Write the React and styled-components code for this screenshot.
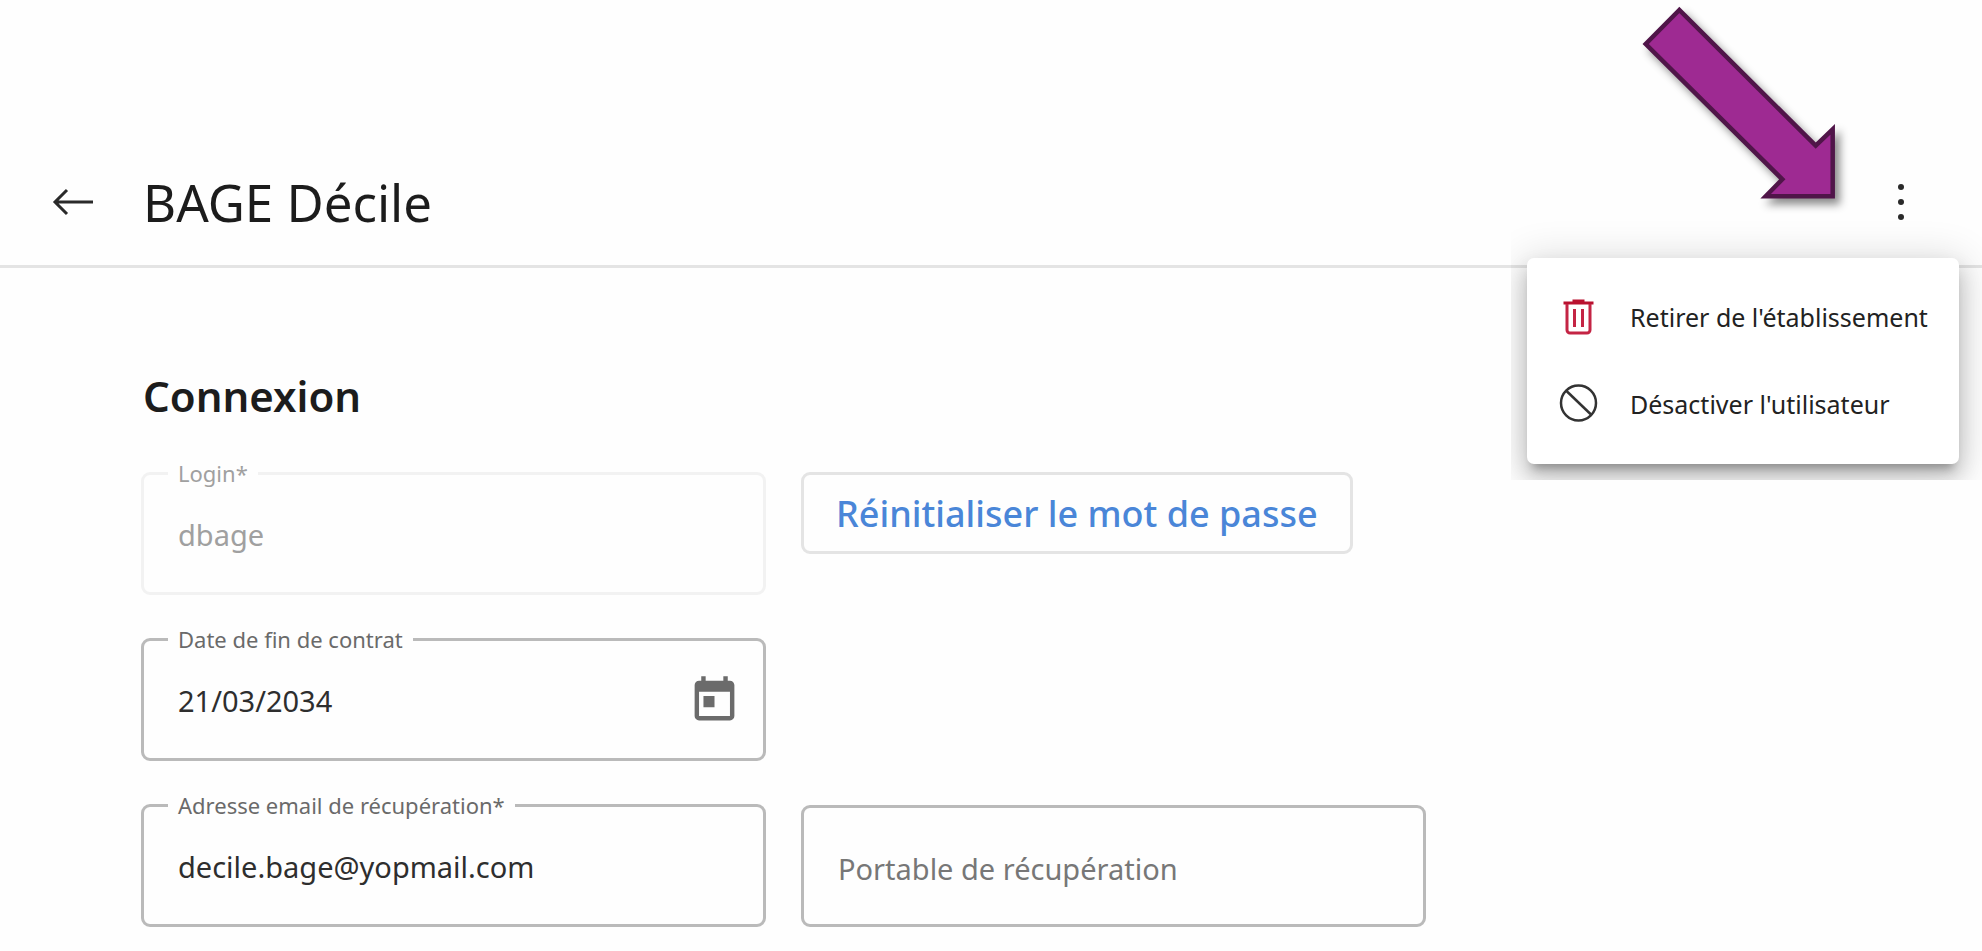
import React, { useState } from "react";
import styled, { createGlobalStyle } from "styled-components";
import { MdToday } from "react-icons/md";

const GlobalStyle = createGlobalStyle`
    * {
        box-sizing: border-box;
    }

    body {
        margin: 0;
        background-color: #fefefe;
        color: #1c1c1c;
        font-family: "Noto Sans", "Open Sans", sans-serif;
    }

    button, input {
        font-family: inherit;
    }
`;

const Page = styled.div`
    position: relative;
    padding-top: 139px;
`;

const Header = styled.header`
    display: flex;
    align-items: center;
    height: 129px;
    padding: 0 60px 0 52px;
    border-bottom: 3px solid #e4e4e4;
`;

const IconButton = styled.button`
    display: flex;
    align-items: center;
    justify-content: center;
    padding: 0;
    border: none;
    background: none;
    color: ${(props) => props.$color || "#2a2a2a"};
    cursor: pointer;
`;

const Title = styled.h1`
    flex: 1;
    margin: 0 0 0 49px;
    font-size: 51px;
    font-weight: 400;
    line-height: 60px;
`;

const Menu = styled.ul`
    position: absolute;
    top: 258px;
    right: 23px;
    width: 432px;
    margin: 0;
    padding: 15px 0 17px;
    list-style: none;
    border-radius: 7px;
    background-color: #fff;
    box-shadow: 0 10px 10px -6px rgba(0, 0, 0, 0.28), 0 12px 20px 2px rgba(0, 0, 0, 0.16), 0 6px 40px 6px rgba(0, 0, 0, 0.14);
    clip-path: inset(-50px -23px -16px -16px);
`;

const MenuItem = styled.button`
    display: flex;
    align-items: center;
    gap: 31px;
    width: 100%;
    height: 87px;
    padding: 0 0 0 32px;
    border: none;
    background: none;
    color: #222;
    font-size: 25px;
    white-space: nowrap;
    cursor: pointer;
`;

const Pointer = styled.svg`
    position: absolute;
    top: 0;
    right: 132px;
    filter: drop-shadow(5px 6px 4px rgba(0, 0, 0, 0.45));
`;

const Section = styled.form`
    padding: 98px 141px 22px;
`;

const SectionTitle = styled.h2`
    margin: 0 0 35px;
    padding-left: 2px;
    font-size: 42px;
    font-weight: 600;
    line-height: 60px;
`;

const Grid = styled.div`
    display: grid;
    grid-template-columns: repeat(2, minmax(0, 625px));
    gap: 32px 35px;
`;

const Field = styled.fieldset`
    grid-column-start: 1;
    display: flex;
    align-items: center;
    min-width: 0;
    height: 134px;
    margin: 0;
    padding: 0 22px 9px 24px;
    border: 3px solid ${(props) => (props.$disabled ? "#f2f2f2" : "#bababa")};
    border-radius: 9px;
    color: ${(props) => (props.$disabled ? "#a0a0a0" : "#2e2e2e")};
`;

const PlainField = styled(Field)`
    grid-column-start: 2;
    align-self: end;
    height: 122px;
    padding-top: 4px;
    padding-bottom: 0;
`;

const Legend = styled.legend`
    padding: 0 10px;
    color: ${(props) => (props.$disabled ? "#a0a0a0" : "#6a6a6a")};
    font-size: 22px;
    line-height: 24px;
`;

const Input = styled.input`
    flex: 1;
    min-width: 0;
    height: 94px;
    padding: 0 10px;
    border: none;
    outline: none;
    background: none;
    color: inherit;
    font-size: 29px;

    &::placeholder {
        color: #777;
        opacity: 1;
    }
`;

const OutlineButton = styled.button`
    justify-self: start;
    height: 82px;
    margin-top: 11px;
    padding: 0 32px;
    border: 3px solid #e4e4e4;
    border-radius: 9px;
    background: none;
    color: #4a86d8;
    font-size: 36px;
    font-weight: 500;
    white-space: nowrap;
    cursor: pointer;
`;

const ArrowIcon = () => (
    <svg width="42" height="30" viewBox="0 0 42 30" fill="none" stroke="currentColor" strokeWidth="3">
        <path d="M41 15H3M15 3L3 15l12 12" />
    </svg>
);

const DotsIcon = () => (
    <svg width="42" height="42" viewBox="0 0 42 42" fill="currentColor">
        <circle cx="21" cy="6" r="3" />
        <circle cx="21" cy="21" r="3" />
        <circle cx="21" cy="36" r="3" />
    </svg>
);

const TrashIcon = () => (
    <svg width="40" height="40" viewBox="0 0 40 40" fill="none" stroke="#c42444" strokeWidth="3">
        <path d="M4.500 6h30M13.500 4h12" stroke="#b9112f" />
        <path d="M8 7v26a3 3 0 0 0 3 3h17a3 3 0 0 0 3-3V7" />
        <path d="M15.500 12v18M23.500 12v18" />
    </svg>
);

const BanIcon = () => (
    <svg width="40" height="40" viewBox="0 0 40 40" fill="none" stroke="#333" strokeWidth="2.5">
        <circle cx="19.500" cy="19" r="17.500" />
        <path d="M7.500 7l24.500 23.500" />
    </svg>
);

const TextField = ({ id, label, value, onChange, disabled, children }) => (
    <Field $disabled={disabled}>
        <Legend $disabled={disabled}>
            <label htmlFor={id}>{label}</label>
        </Legend>
        <Input id={id} name={id} value={value} onChange={onChange} disabled={disabled} />
        {children}
    </Field>
);

const App = () => {
    const [form, setForm] = useState({
        login: "dbage",
        finContrat: "21/03/2034",
        email: "decile.bage@yopmail.com",
        portable: "",
    });
    const [menuOpen, setMenuOpen] = useState(true);

    const handleChange = (e) => {
        setForm({ ...form, [e.target.name]: e.target.value });
    };

    return (
        <Page>
            <GlobalStyle />
            <Header>
                <IconButton type="button" aria-label="Retour">
                    <ArrowIcon />
                </IconButton>
                <Title>BAGE Décile</Title>
                <IconButton type="button" aria-label="Actions" onClick={() => setMenuOpen(!menuOpen)}>
                    <DotsIcon />
                </IconButton>
            </Header>

            {menuOpen && (
                <Menu>
                    <li>
                        <MenuItem type="button">
                            <TrashIcon />
                            Retirer de l'établissement
                        </MenuItem>
                    </li>
                    <li>
                        <MenuItem type="button">
                            <BanIcon />
                            Désactiver l'utilisateur
                        </MenuItem>
                    </li>
                </Menu>
            )}

            <Pointer width="210" height="215" viewBox="0 0 210 215" aria-hidden="true">
                <path
                    d="M39.300 10L5.700 44l136.600 135.300-16.600 17h67v-67l-17 16.400z"
                    fill="#9e2a92"
                    stroke="#501549"
                    strokeWidth="4.5"
                />
            </Pointer>

            <Section>
                <SectionTitle>Connexion</SectionTitle>
                <Grid>
                    <TextField id="login" label="Login*" value={form.login} disabled />
                    <OutlineButton type="button">Réinitialiser le mot de passe</OutlineButton>
                    <TextField
                        id="finContrat"
                        label="Date de fin de contrat"
                        value={form.finContrat}
                        onChange={handleChange}
                    >
                        <IconButton type="button" aria-label="Choisir une date" $color="#6b6b6b">
                            <MdToday size={53} />
                        </IconButton>
                    </TextField>
                    <TextField
                        id="email"
                        label="Adresse email de récupération*"
                        value={form.email}
                        onChange={handleChange}
                    />
                    <PlainField as="div">
                        <Input
                            name="portable"
                            aria-label="Portable de récupération"
                            placeholder="Portable de récupération"
                            value={form.portable}
                            onChange={handleChange}
                        />
                    </PlainField>
                </Grid>
            </Section>
        </Page>
    );
};

export default App;
